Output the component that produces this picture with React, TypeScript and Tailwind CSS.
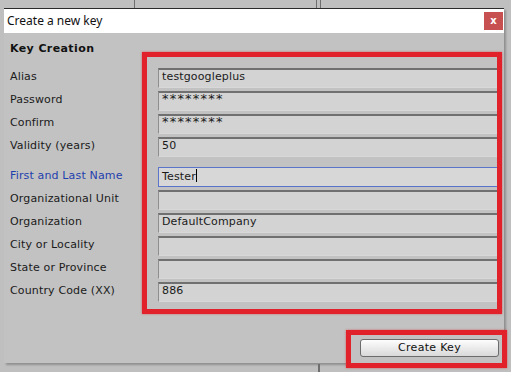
import React from 'react';

interface Field {
  label: string;
  value: string;
  focused?: boolean;
  secret?: boolean;
}

const groupA: Field[] = [
  { label: 'Alias', value: 'testgoogleplus' },
  { label: 'Password', value: '********', secret: true },
  { label: 'Confirm', value: '********', secret: true },
  { label: 'Validity (years)', value: '50' },
];

const groupB: Field[] = [
  { label: 'First and Last Name', value: 'Tester', focused: true },
  { label: 'Organizational Unit', value: '' },
  { label: 'Organization', value: 'DefaultCompany' },
  { label: 'City or Locality', value: '' },
  { label: 'State or Province', value: '' },
  { label: 'Country Code (XX)', value: '886' },
];

function Row({ field }: { field: Field }) {
  return (
    <div className="flex h-[20px] mb-[3px]">
      <div
        className={`w-[148px] shrink-0 pt-[2px] leading-[14px] ${
          field.focused ? 'text-[#1f3fae]' : 'text-[#1a1a1a]'
        }`}
      >
        {field.label}
      </div>
      <div
        className={`w-[342px] h-[20px] pl-[3px] leading-[14px] ${
          field.focused
            ? 'border border-[#5a74cc] bg-[#d7d7d7] pt-[1px]'
            : 'border border-[#8e8e8e] border-t-2 border-t-[#707070] border-b-[#d8d8d8] bg-[#d3d3d3]'
        }`}
      >
        {field.secret ? (
          <span className="text-[13px] tracking-[1.2px] leading-[12px] block">{field.value}</span>
        ) : (
          field.value
        )}
        {field.focused && <span className="inline-block w-px h-[13px] bg-black align-[-2px]" />}
      </div>
    </div>
  );
}

export default function App() {
  return (
    <div className="relative w-[511px] h-[372px] overflow-hidden bg-[#bfbfbf]">
      {/* editor panels behind the window */}
      <div className="absolute left-[134px] top-0 w-px h-[8px] bg-[#6e6e6e]" />
      <div className="absolute left-[316px] top-0 w-px h-[8px] bg-[#6e6e6e]" />
      <div className="absolute left-[320px] top-0 w-px h-[8px] bg-[#6e6e6e]" />
      <div className="absolute left-[318px] top-[364px] w-[2px] h-[8px] bg-[#6e6e6e]" />

      <div className="ml-[4px] mt-[8px] w-[500px] h-[355px] flex flex-col shadow-[2px_2px_2px_rgba(0,0,0,0.25)]">
        <div className="h-[25px] shrink-0 bg-white border-t border-[#2a2a2a] flex items-center justify-between pl-[3px] pr-[1px]">
          <span className="text-[12px] text-[#111] font-['Noto_Sans',sans-serif]">Create a new key</span>
          <div className="w-[19px] h-[18px] bg-[#c75050] flex items-center justify-center text-white text-[10px] font-bold leading-none font-['DejaVu_Sans',sans-serif] pb-[1px]">
            x
          </div>
        </div>
        <div className="flex-1 flex flex-col bg-[#c2c2c2] pl-[6px] text-[11px] tracking-[0.15px] font-['DejaVu_Sans',sans-serif] text-[#1a1a1a]">
          <div className="mt-[9px] h-[14px] leading-[14px] font-bold tracking-[0.4px] text-[#111]">Key Creation</div>
          <div className="mt-[12px] flex flex-col">
            {groupA.map((f) => (
              <Row key={f.label} field={f} />
            ))}
          </div>
          <div className="mt-[7px] flex flex-col">
            {groupB.map((f) => (
              <Row key={f.label} field={f} />
            ))}
          </div>
          <div className="mt-[34px] flex justify-end pr-[5px]">
            <button className="w-[139px] h-[18px] rounded-[3px] border border-[#6c6c6c] bg-gradient-to-b from-[#fdfdfd] to-[#d9d9d9] text-[11px] leading-[16px] text-[#111] tracking-[0.3px] font-['DejaVu_Sans',sans-serif]">
              Create Key
            </button>
          </div>
        </div>
      </div>

      {/* annotation boxes */}
      <div className="absolute left-[142px] top-[52px] w-[360px] h-[262px] border-[5px] border-[#e1222a] shadow-[0_0_2px_rgba(225,34,42,0.6)]" />
      <div className="absolute left-[346px] top-[330px] w-[161px] h-[38px] border-[5px] border-[#e1222a] shadow-[0_0_2px_rgba(225,34,42,0.6)]" />
    </div>
  );
}
